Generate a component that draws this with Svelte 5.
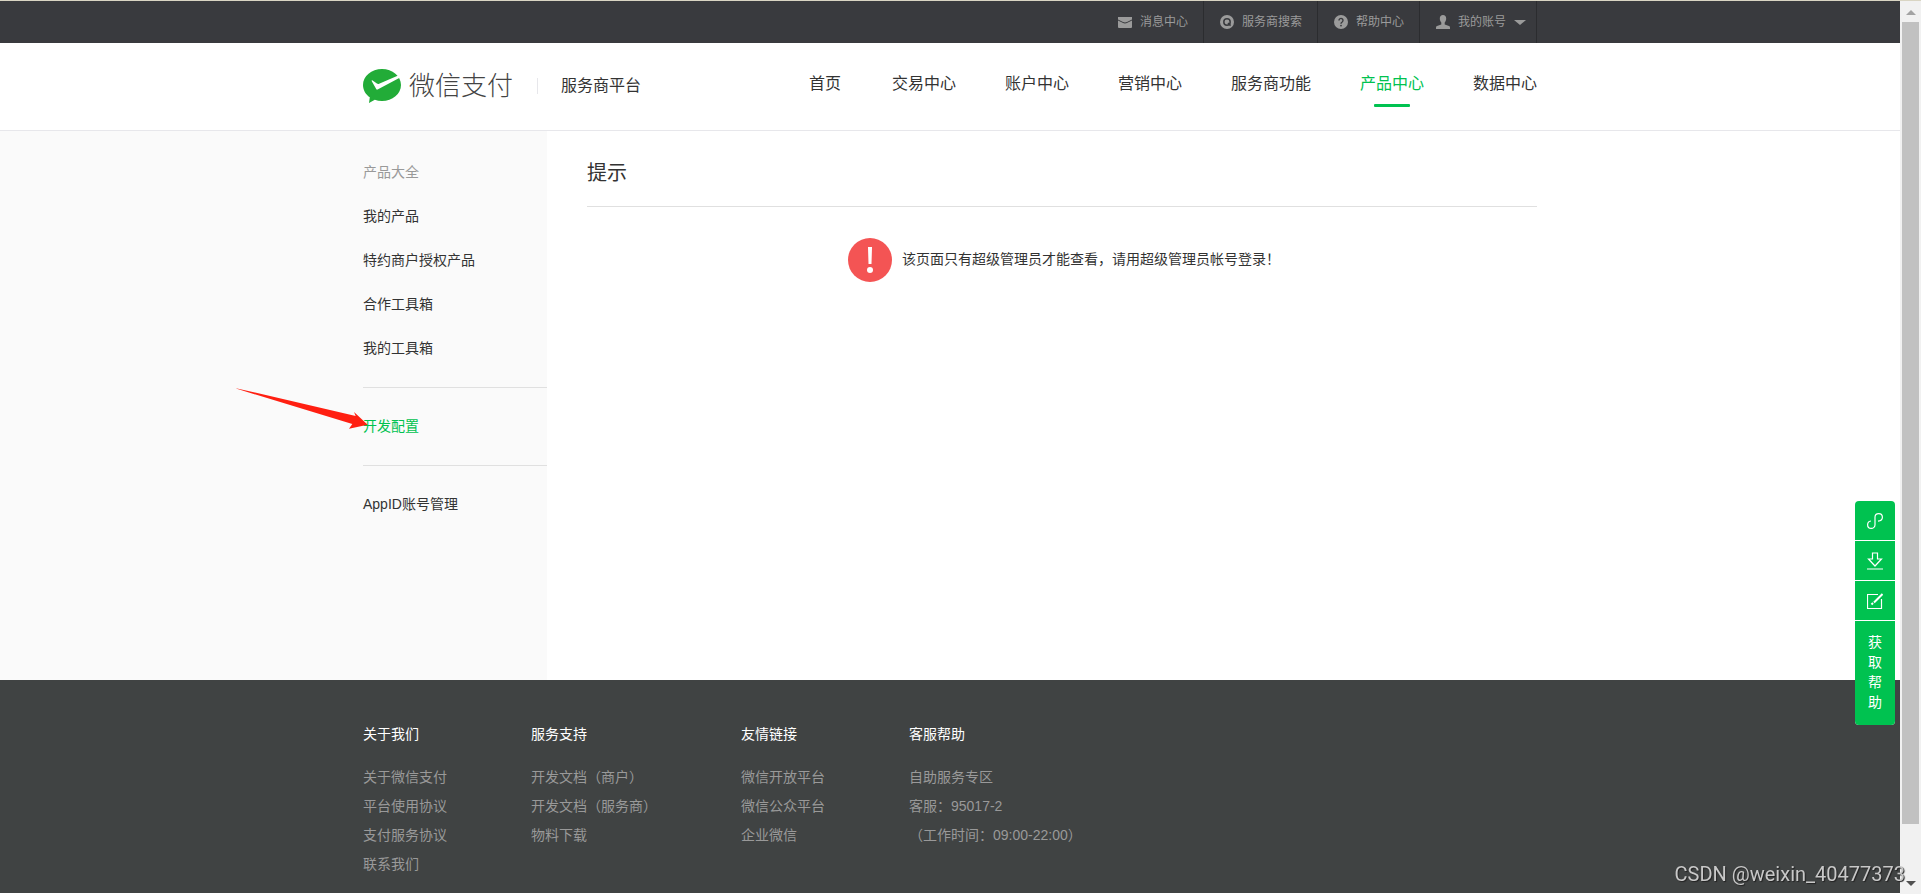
<script lang="ts">
  // Service provider console: product center, no-permission notice

  interface FooterColumn {
    title: string;
    items: { text: string; link: boolean }[];
  }

  const navItems = ['首页', '交易中心', '账户中心', '营销中心', '服务商功能', '产品中心', '数据中心'];
  const menuGroups = [
    ['我的产品', '特约商户授权产品', '合作工具箱', '我的工具箱'],
    ['开发配置'],
    ['AppID账号管理'],
  ];

  const link = (text: string) => ({ text, link: true });
  const plain = (text: string) => ({ text, link: false });

  const footerColumns: FooterColumn[] = [
    { title: '关于我们', items: ['关于微信支付', '平台使用协议', '支付服务协议', '联系我们'].map(link) },
    { title: '服务支持', items: ['开发文档（商户）', '开发文档（服务商）', '物料下载'].map(link) },
    { title: '友情链接', items: ['微信开放平台', '微信公众平台', '企业微信'].map(link) },
    {
      title: '客服帮助',
      items: [link('自助服务专区'), plain('客服：95017-2'), plain('（工作时间：09:00-22:00）')],
    },
  ];

  let activeNav = $state('产品中心');
  let activeMenu = $state('开发配置');
</script>

<div class="window" lang="zh-CN">
  <div class="page">
    <div class="topbar">
      <div class="container topbar-inner">
        <a class="top-link" href="#message">
          <svg viewBox="0 0 14 14" width="14" height="14">
            <path fill="currentColor" d="M0 2h14v2.500L9 6.900a4.500 4.500 0 0 1-4 0L0 4.500z" />
            <path fill="currentColor" d="M0 5.500l4.600 2.300a5.400 5.400 0 0 0 4.800 0L14 5.500V12a1 1 0 0 1-1 1H1a1 1 0 0 1-1-1z" />
          </svg>
          <span>消息中心</span>
        </a>
        <a class="top-link" href="#search">
          <svg viewBox="0 0 14 14" width="14" height="14">
            <circle cx="7" cy="7" r="7" fill="currentColor" />
            <circle cx="7" cy="7" r="3.2" fill="none" stroke="#393a3e" stroke-width="1.5" />
            <path d="M8 8l2.6 2.6" stroke="#393a3e" stroke-width="1.5" />
          </svg>
          <span>服务商搜索</span>
        </a>
        <a class="top-link" href="#help">
          <svg viewBox="0 0 14 14" width="14" height="14">
            <circle cx="7" cy="7" r="7" fill="currentColor" />
            <path d="M5 5.500a2 2 0 1 1 3.200 1.500C7.400 7.500 7 7.800 7 8.800" fill="none" stroke="#393a3e" stroke-width="1.400" />
            <circle cx="7" cy="10.600" r="0.900" fill="#393a3e" />
          </svg>
          <span>帮助中心</span>
        </a>
        <button class="top-link account" type="button">
          <svg viewBox="0 0 14 14" width="14" height="14">
            <path fill="currentColor" d="M7 0c2 0 3.200 1.400 3.200 3.500 0 1.700-.7 3.200-1.500 4v1.900l4.300 1.600c.7.300 1 .8 1 1.500V14H0v-1.500c0-.7.300-1.200 1-1.500l4.300-1.600V7.500c-.8-.8-1.500-2.300-1.500-4C3.800 1.400 5 0 7 0z" />
          </svg>
          <span>我的账号</span>
          <i class="caret"></i>
        </button>
      </div>
    </div>

    <header class="header">
      <div class="container header-inner">
        <a class="brand" href="#home">
          <svg viewBox="0 0 38 34" width="38" height="34">
            <path fill="#22ac38" d="M19 0c10.500 0 19 7.200 19 16s-8.500 16-19 16c-2.600 0-5-.4-7.200-1.200L6 34l.8-5.700C2.600 25.400 0 21 0 16 0 7.200 8.500 0 19 0z" />
            <path fill="#fff" d="M14.600 20.600c-.6.300-1.100.1-1.400-.5L8.800 12.300c-.4-.8.2-1.200.8-.8l4.300 3.100c.7.400 1.400.5 2.200.2L35.200 6.500l1.500 2.300z" />
          </svg>
          <span class="brand-name">微信支付</span>
        </a>
        <span class="platform">服务商平台</span>
        <nav class="nav">
          {#each navItems as item}
            <a
              href="#nav"
              class="nav-link"
              class:active={item === activeNav}
              onclick={() => (activeNav = item)}
            >{item}</a>
          {/each}
        </nav>
      </div>
    </header>

    <div class="main">
      <aside class="sidebar">
        <h3 class="menu-title">产品大全</h3>
        {#each menuGroups as group}
          <ul class="menu-group">
            {#each group as item}
              <li class="menu-item">
                <a
                  href="#menu"
                  class:active={item === activeMenu}
                  onclick={() => (activeMenu = item)}
                >{item}</a>
                {#if item === '开发配置'}
                  <svg class="pointer" viewBox="0 0 132 42" width="132" height="42">
                    <path fill="#ff1f11" d="M0 .6L1 .4l118.700 27.700L118 24l13.700 12.700L113 40.700l3.300-4.700z" />
                  </svg>
                {/if}
              </li>
            {/each}
          </ul>
        {/each}
      </aside>

      <main class="content">
        <h2 class="title">提示</h2>
        <div class="notice" role="alert">
          <svg viewBox="0 0 44 44" width="44" height="44">
            <circle cx="22" cy="22" r="22" fill="#f45454" />
            <path fill="#fff" d="M20 9h4l-.5 17h-3z" />
            <circle cx="22" cy="32" r="3" fill="#fff" />
          </svg>
          <p>该页面只有超级管理员才能查看，请用超级管理员帐号登录！</p>
        </div>
      </main>
    </div>

    <footer class="footer">
      <div class="container footer-inner">
        {#each footerColumns as column}
          <section>
            <h4>{column.title}</h4>
            <ul>
              {#each column.items as item}
                <li>
                  {#if item.link}<a href="#footer">{item.text}</a>{:else}{item.text}{/if}
                </li>
              {/each}
            </ul>
          </section>
        {/each}
      </div>
    </footer>
  </div>

  <div class="scrollbar" aria-hidden="true">
    <i class="arrow up"></i>
    <div class="thumb"></div>
    <i class="arrow down"></i>
  </div>

  <div class="tools">
    <button type="button" aria-label="小程序">
      <svg viewBox="0 0 16 16" width="16" height="16">
        <path d="M4 8C2 8.300.6 9.800.6 11.700c0 2.100 1.500 3.700 3.600 3.700S8 13.800 8 11.700V4.300C8 2.200 9.600.6 11.700.6s3.700 1.600 3.700 3.700c0 2-1.400 3.600-4.400 3.900" />
      </svg>
    </button>
    <button type="button" aria-label="下载">
      <svg viewBox="0 0 16 18" width="16" height="18">
        <path d="M5.500 1h5v6h4L8 14 1.500 7h4zM0 17h16" />
      </svg>
    </button>
    <button type="button" aria-label="反馈">
      <svg viewBox="0 0 16 16" width="16" height="16">
        <path d="M11 1.500H.5v14h14V6" />
        <path d="M15.500 1L7 9.500" stroke-width="2" />
        <path d="M6 10l-1.500 1.500" stroke-width="2" />
      </svg>
    </button>
    <button type="button" class="get-help">获取帮助</button>
  </div>

  <div class="watermark">CSDN @weixin_40477373</div>
</div>

<style>
  :global(body) {
    background: #fff;
  }

  .window {
    display: flex;
    min-height: 100vh;
    box-sizing: border-box;
    border-top: 1px solid #d9d5c3;
    position: relative;
    font-family: 'Liberation Sans', 'Noto Sans CJK SC', sans-serif;
    font-size: 14px;
    line-height: 20px;
    color: #333;
  }

  .page {
    flex: 1;
    min-width: 0;
    display: flex;
    flex-direction: column;
    padding-bottom: 1px;
  }

  .container {
    width: 1174px;
    max-width: 100%;
    margin: 0 auto;
  }

  h2,
  h3,
  h4,
  p,
  ul {
    margin: 0;
    padding: 0;
    font-weight: 400;
    list-style: none;
  }

  a {
    color: inherit;
    text-decoration: none;
  }

  button {
    font: inherit;
    border: 0;
    padding: 0;
    background: none;
    cursor: pointer;
  }

  svg {
    display: block;
    flex-shrink: 0;
  }

  .topbar {
    background: #393a3e;
  }

  .topbar-inner {
    display: flex;
    justify-content: flex-end;
    height: 42px;
  }

  .top-link {
    display: flex;
    align-items: center;
    gap: 8px;
    padding: 0 15px 0 16px;
    border-right: 1px solid #2b2c2f;
    color: #9b9b9b;
    font-size: 12px;
  }

  .top-link.account {
    padding-right: 10px;
  }

  .caret {
    border: 6px solid transparent;
    border-top: 5px solid #9b9b9b;
    border-bottom: 0;
  }

  .header {
    border-bottom: 1px solid #e7e7eb;
  }

  .header-inner {
    display: flex;
    align-items: center;
    height: 85px;
    padding-bottom: 2px;
  }

  .brand {
    display: flex;
    align-items: center;
    gap: 8px;
  }

  .brand-name {
    font-size: 26px;
    line-height: 32px;
    font-weight: 300;
    color: #444;
  }

  .platform {
    margin-left: 24px;
    padding-left: 24px;
    font-size: 16px;
    background: linear-gradient(#e7e7eb, #e7e7eb) left center / 1px 16px no-repeat;
  }

  .nav {
    display: flex;
    gap: 49px;
    margin-left: auto;
  }

  .nav-link {
    display: flex;
    flex-direction: column;
    align-items: center;
    font-size: 16px;
    line-height: 24px;
    padding-top: 8px;
  }

  .nav-link::after {
    content: '';
    width: 36px;
    height: 3px;
    margin-top: 8px;
    border-radius: 1px;
  }

  .nav-link.active {
    color: #00c250;
  }

  .nav-link.active::after {
    background: #00c250;
  }

  .main {
    flex: 1;
    display: flex;
  }

  .sidebar {
    box-sizing: border-box;
    width: calc(50% - 403px);
    padding: 19px 0 19px calc(50% - 587px);
    background: #fafafa;
  }

  .menu-title,
  .menu-item {
    font-size: 14px;
    line-height: 44px;
  }

  .menu-title {
    color: #999;
  }

  .menu-item {
    position: relative;
  }

  .menu-group + .menu-group {
    margin-top: 17px;
    padding-top: 16px;
    border-top: 1px solid #e0e0e0;
  }

  .menu-item .active {
    color: #00c250;
  }

  .pointer {
    position: absolute;
    right: calc(100% - 5px);
    top: -16px;
  }

  .content {
    flex: 1;
    padding: 26px calc(50% - 587px) 0 40px;
  }

  .title {
    padding-bottom: 17px;
    border-bottom: 1px solid #e0e0e0;
    font-size: 20px;
    line-height: 32px;
  }

  .notice {
    display: flex;
    align-items: center;
    justify-content: center;
    gap: 10px;
    padding: 31px 0 0 4px;
  }

  .notice p {
    padding-bottom: 2px;
  }

  .footer {
    background: #404343;
    color: #999;
  }

  .footer-inner {
    display: flex;
    gap: 84px;
    padding: 44px 0 14px;
  }

  .footer h4 {
    color: #fff;
    margin-bottom: 19px;
  }

  .footer li {
    line-height: 29px;
  }

  .scrollbar {
    display: flex;
    flex-direction: column;
    align-items: center;
    width: 21px;
    box-sizing: border-box;
    padding: 9px 2px 8px;
    background: #f1f1f1;
  }

  .thumb {
    width: 17px;
    height: 802px;
    max-height: 92%;
    margin: 7px 0 auto;
    background: #c1c1c1;
  }

  .arrow {
    border: 5px solid transparent;
  }

  .arrow.up {
    border-top: 0;
    border-bottom-color: #a3a3a3;
  }

  .arrow.down {
    border-bottom: 0;
    border-top-color: #505050;
  }

  .tools {
    position: fixed;
    right: 26px;
    bottom: 169px;
    display: flex;
    flex-direction: column;
    gap: 1px;
    width: 40px;
    border-radius: 4px;
    overflow: hidden;
    background: #fff;
  }

  .tools button {
    display: flex;
    align-items: center;
    justify-content: center;
    height: 39px;
    background: #00c250;
    color: #fff;
  }

  .tools svg {
    fill: none;
    stroke: #fff;
    stroke-width: 1.2;
  }

  .tools .get-help {
    height: auto;
    padding: 11px 13px 13px;
    line-height: 20px;
  }

  .watermark {
    position: fixed;
    right: 16px;
    bottom: 8px;
    font-family: Roboto, sans-serif;
    font-size: 20px;
    line-height: 24px;
    color: #c8c8c8;
    text-shadow: 1px 1px 1px #222;
  }
</style>
